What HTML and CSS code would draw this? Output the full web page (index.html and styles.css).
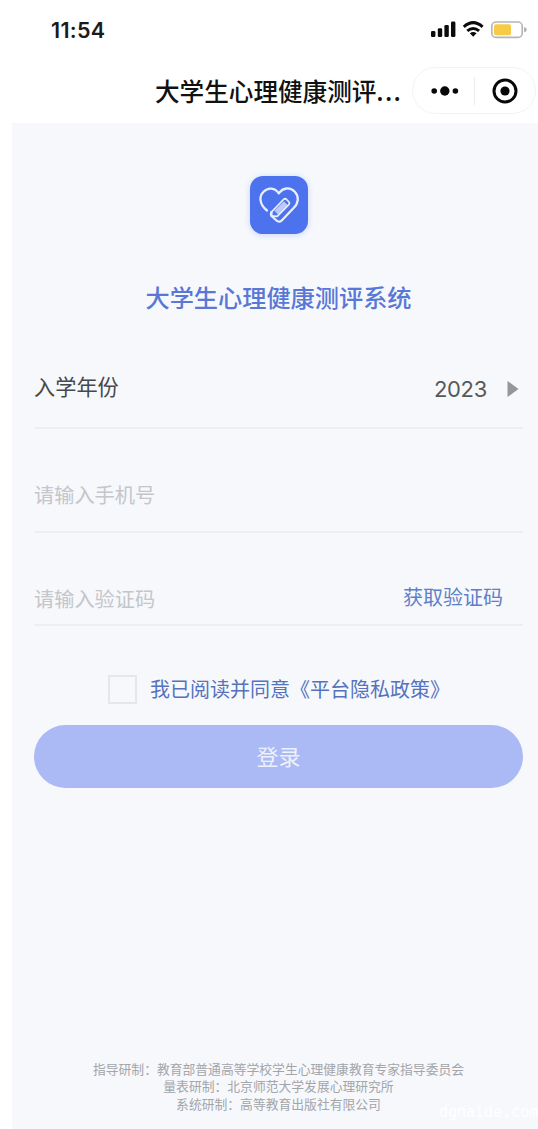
FILE: index.html
```html
<!DOCTYPE html>
<html lang="zh-CN">
<head>
<meta charset="utf-8">
<title>大学生心理健康测评系统</title>
<link rel="stylesheet" href="styles.css">
</head>
<body>
<div class="phone">
  <header class="top">
    <div class="status">
      <span class="time">11:54</span>
      <svg class="indicators" width="98" height="20" viewBox="0 0 98 20">
        <g fill="#0b0b0b">
          <rect x="1" y="11" width="4.4" height="6" rx="1.3"/>
          <rect x="7.8" y="8.3" width="4.4" height="8.7" rx="1.3"/>
          <rect x="14.4" y="5" width="4.4" height="12" rx="1.3"/>
          <rect x="21" y="1.6" width="4.4" height="15.4" rx="1.3"/>
        </g>
        <g fill="none" stroke="#0b0b0b" stroke-width="3">
          <path d="M33.8 6.8Q43.2-1.6 52.6 6.8"/>
          <path d="M37.3 10.9Q43.2 6 49.1 10.9"/>
        </g>
        <path d="M39.8 13.2Q43.2 10.8 46.6 13.2L43.2 16.8Z" fill="#0b0b0b"/>
        <rect x="61.8" y="2" width="30.4" height="15.4" rx="4.2" fill="#fff" stroke="#b5b5b5" stroke-width="1.6"/>
        <rect x="64" y="4.2" width="17" height="11" rx="2" fill="#f7cb45"/>
        <path d="M94 7.2Q96.8 7.5 96.8 9.7Q96.8 11.9 94 12.2Z" fill="#b5b5b5"/>
      </svg>
    </div>
    <div class="navbar">
      <h1 class="nav-title">大学生心理健康测评<span class="dots">...</span></h1>
      <div class="capsule">
        <svg width="28" height="12" viewBox="0 0 28 12"><circle cx="3.2" cy="6" r="2.8"/><circle cx="13.8" cy="6" r="4.7"/><circle cx="24.4" cy="6" r="2.8"/></svg>
        <span class="capsule-divider"></span>
        <svg width="26" height="26" viewBox="0 0 26 26"><circle cx="13" cy="13" r="11" fill="none" stroke="#080808" stroke-width="3"/><circle cx="13" cy="13" r="4.6"/></svg>
      </div>
    </div>
  </header>
  <main class="panel">
    <div class="logo">
      <svg width="58" height="58" viewBox="0 0 58 58" fill="none" stroke="#e9eefd" stroke-linecap="round" stroke-linejoin="round">
        <path d="M17 34.5C9 28 9 20 13.5 15.8C18.5 10.8 25 12 28.8 17.4C33 11.5 40 10.8 44.8 15.8C49.3 20.6 48.6 27 43.6 32L32.2 44C30.4 46 28.3 46.2 26.5 44.5L22 40.5Q20.2 38.5 21.5 36" stroke-width="2.3"/>
        <path d="M21.5 36L33.5 23.5Q35 22 36.6 23.5L39 26Q40 27.3 38.8 28.7L27.2 40.3L21.5 40Z" stroke-width="1.8"/>
        <path d="M25 34.6L33.8 25.8L37 29L28.2 37.8Z" fill="#bdcaf8" stroke="#bdcaf8" stroke-width="1"/>
      </svg>
    </div>
    <h2 class="heading">大学生心理健康测评系统</h2>
    <form class="form">
      <div class="row row-year">
        <span class="label">入学年份</span>
        <span class="year">2023</span>
        <svg class="arrow" width="12" height="16" viewBox="0 0 12 16"><path d="M.5 0L11.5 8L.5 16Z" fill="#949699"/></svg>
      </div>
      <div class="row row-phone"><span class="placeholder">请输入手机号</span></div>
      <div class="row row-code"><span class="placeholder">请输入验证码</span><span class="get-code">获取验证码</span></div>
      <div class="agree"><span class="checkbox"></span><span class="policy">我已阅读并同意《平台隐私政策》</span></div>
      <div class="login">登录</div>
    </form>
    <footer class="credits">
      <div>指导研制：教育部普通高等学校学生心理健康教育专家指导委员会</div>
      <div>量表研制：北京师范大学发展心理研究所</div>
      <div>系统研制：高等教育出版社有限公司</div>
    </footer>
    <span class="watermark">dgnaide.com</span>
  </main>
</div>
</body>
</html>
```
FILE: styles.css
```css
* { box-sizing: border-box; }
body {
  margin: 0;
  background: #fff;
  font-family: Inter, "Noto Sans CJK SC", sans-serif;
}
.phone {
  width: 538px;
  height: 1129px;
  display: flex;
  flex-direction: column;
  overflow: hidden;
}
.top { height: 123px; flex: none; }
.status {
  height: 60px;
  padding: 0 10px 0 51px;
  display: flex;
  align-items: center;
  justify-content: space-between;
}
.time { font-size: 21.5px; font-weight: 600; color: #1b1b1b; letter-spacing: 0.3px; padding-bottom: 1px; }
.navbar {
  height: 63px;
  padding: 0 2px 0 155px;
  display: flex;
  align-items: flex-start;
  justify-content: space-between;
}
.nav-title {
  margin: 0;
  padding-top: 12px;
  font: 500 24.6px/36px "Noto Sans CJK SC", sans-serif;
  color: #111;
  white-space: nowrap;
}
.dots { letter-spacing: 1.3px; }
.capsule {
  flex: none;
  width: 124px;
  height: 47px;
  margin-top: 7px;
  margin-left: -10px;
  padding: 0 17px 0 18px;
  display: flex;
  align-items: center;
  justify-content: space-between;
  border: 1px solid #f3f3f4;
  border-radius: 24px;
  fill: #080808;
}
.capsule-divider { width: 1px; height: 28px; background: #ececee; margin-left: -3px; }
.panel {
  position: relative;
  flex: 1;
  margin-left: 12px;
  padding: 53px 15px 0 22px;
  display: flex;
  flex-direction: column;
  align-items: center;
  background: #f6f8fc;
}
.logo {
  width: 58px;
  height: 58px;
  border-radius: 13px;
  background: #4c72ee;
  box-shadow: 0 1px 6px #c9d5f8;
}
.heading {
  margin: 45px 0 0;
  font: 500 24.2px/36px "Noto Sans CJK SC", sans-serif;
  color: #5877d6;
}
.form { align-self: stretch; margin-top: 35px; }
.row {
  display: flex;
  align-items: flex-end;
  border-bottom: 2px solid #eceef2;
  font-family: "Noto Sans CJK SC", sans-serif;
  line-height: 30px;
}
.row-year { height: 79px; padding: 0 4px 23px 0; }
.label { flex: 1; font-size: 21.2px; color: #46484c; padding-bottom: 3px; }
.year {
  font: 400 22px/30px Inter, sans-serif;
  letter-spacing: -0.3px;
  color: #56585c;
}
.arrow { margin: 0 0 7px 20px; }
.row-phone { height: 104px; padding-bottom: 21px; }
.row-code { height: 93px; padding: 0 20px 10px 0; justify-content: space-between; }
.placeholder { font-size: 20.2px; color: #c4c6ca; }
.get-code { font-size: 20px; color: #5f7fc8; padding-bottom: 2px; }
.agree {
  display: flex;
  align-items: center;
  height: 30px;
  margin-top: 48px;
  padding-left: 74px;
}
.checkbox { width: 29px; height: 29px; border: 2px solid #e5e7eb; }
.policy {
  margin-left: 13px;
  font: 400 20px/30px "Noto Sans CJK SC", sans-serif;
  color: #5573bd;
  white-space: nowrap;
}
.login {
  height: 63px;
  margin-top: 21px;
  border-radius: 32px;
  background: #abbaf5;
  color: #edf1fc;
  font: 400 22px/60px "Noto Sans CJK SC", sans-serif;
  text-align: center;
}
.credits {
  margin-top: auto;
  padding-bottom: 17px;
  font: 400 12.8px/17.3px "Noto Sans CJK SC", sans-serif;
  color: #a3a5a9;
  text-align: center;
  white-space: nowrap;
}
.watermark {
  position: absolute;
  left: 427px;
  bottom: 7px;
  font: 15px/20px "DejaVu Sans Mono", monospace;
  color: #fff;
}
```
